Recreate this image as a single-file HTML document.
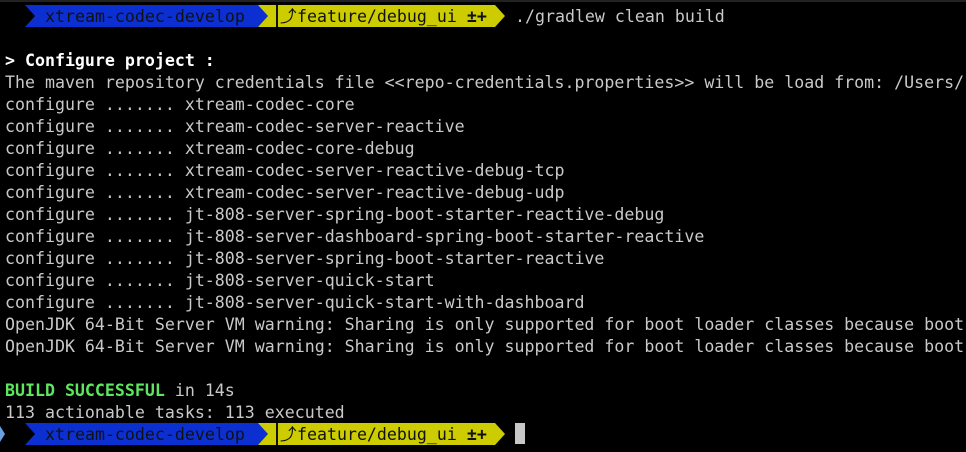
<!DOCTYPE html>
<html><head><style>
html,body{margin:0;padding:0;background:#000;width:966px;height:452px;overflow:hidden}
body{font-family:"DejaVu Sans Mono","Liberation Mono",monospace;font-size:16.6px;color:#c9c9c9;position:relative}
.r{position:absolute;left:5px;height:22px;line-height:24px;white-space:pre}
.b{font-weight:bold;color:#fff}
.g{font-weight:bold;color:#5fe65f}
.seg{position:absolute;height:22px}
.blue{background:#0b2fd0;clip-path:polygon(0 0,calc(100% - 10px) 0,100% 50%,calc(100% - 10px) 100%,0 100%,10px 50%)}
.yel{background:#cccc00;clip-path:polygon(0 0,calc(100% - 10px) 0,100% 50%,calc(100% - 10px) 100%,0 100%)}
.st{position:absolute;height:22px;line-height:23px;color:#111;white-space:pre}
</style></head><body>
<div style="position:absolute;left:0;top:0;width:966px;height:2px;background:#222"></div>

<div class="seg yel" style="left:255px;top:5px;width:250px"></div>
<div class="seg blue" style="left:25px;top:5px;width:243px"></div>
<div class="st" style="left:45px;top:5px">xtream-codec-develop</div>
<div style="position:absolute;left:276px;top:5px;width:2px;height:22px;background:#111"></div>
<div class="st" style="left:280px;top:5px">⤴</div>
<div class="st" style="left:297px;top:5px">feature/debug_ui <b>±+</b></div>
<div class="r" style="left:515px;top:5px">./gradlew clean build</div>

<div class="r b" style="top:49px">&gt; Configure project :</div>
<div class="r" style="top:71px">The maven repository credentials file &lt;&lt;repo-credentials.properties&gt;&gt; will be load from: /Users/</div>
<div class="r" style="top:93px">configure ....... xtream-codec-core</div>
<div class="r" style="top:115px">configure ....... xtream-codec-server-reactive</div>
<div class="r" style="top:137px">configure ....... xtream-codec-core-debug</div>
<div class="r" style="top:159px">configure ....... xtream-codec-server-reactive-debug-tcp</div>
<div class="r" style="top:181px">configure ....... xtream-codec-server-reactive-debug-udp</div>
<div class="r" style="top:203px">configure ....... jt-808-server-spring-boot-starter-reactive-debug</div>
<div class="r" style="top:225px">configure ....... jt-808-server-dashboard-spring-boot-starter-reactive</div>
<div class="r" style="top:247px">configure ....... jt-808-server-spring-boot-starter-reactive</div>
<div class="r" style="top:269px">configure ....... jt-808-server-quick-start</div>
<div class="r" style="top:291px">configure ....... jt-808-server-quick-start-with-dashboard</div>
<div class="r" style="top:313px">OpenJDK 64-Bit Server VM warning: Sharing is only supported for boot loader classes because boot</div>
<div class="r" style="top:335px">OpenJDK 64-Bit Server VM warning: Sharing is only supported for boot loader classes because boot</div>
<div class="r" style="top:379px"><span class="g">BUILD SUCCESSFUL</span> in 14s</div>
<div class="r" style="top:401px">113 actionable tasks: 113 executed</div>

<div style="position:absolute;left:0;top:426px;width:5px;height:16px;background:#6aa0e0;clip-path:polygon(0 0,100% 50%,0 100%)"></div>
<div class="seg yel" style="left:255px;top:423px;width:250px"></div>
<div class="seg blue" style="left:25px;top:423px;width:243px"></div>
<div class="st" style="left:45px;top:423px">xtream-codec-develop</div>
<div style="position:absolute;left:276px;top:423px;width:2px;height:22px;background:#111"></div>
<div class="st" style="left:280px;top:423px">⤴</div>
<div class="st" style="left:297px;top:423px">feature/debug_ui <b>±+</b></div>
<div style="position:absolute;left:515px;top:423px;width:10px;height:21px;background:#c8c8c8"></div>
</body></html>
